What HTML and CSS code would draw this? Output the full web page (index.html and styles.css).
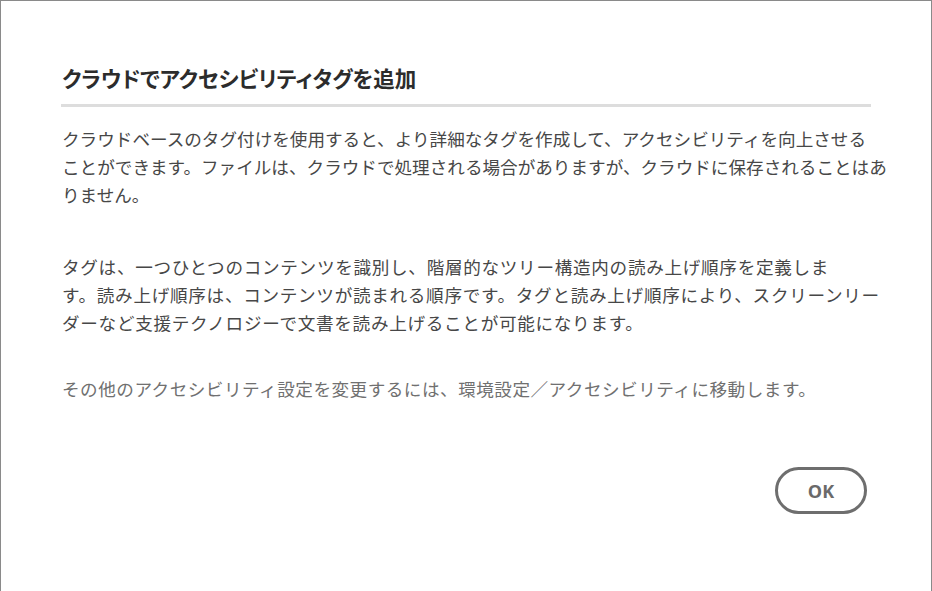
FILE: index.html
```html
<!DOCTYPE html>
<html lang="ja">
<head>
<meta charset="utf-8">
<link rel="stylesheet" href="styles.css">
</head>
<body>
<div class="dialog">
  <h1 class="title">クラウドでアクセシビリティタグを追加</h1>
  <div class="divider"></div>
  <p class="para first">クラウドベースのタグ付けを使用すると、より詳細なタグを作成して、アクセシビリティを向上させる<br>ことができます。ファイルは、クラウドで処理される場合がありますが、クラウドに保存されることはあ<br>りません。</p>
  <p class="para second">タグは、一つひとつのコンテンツを識別し、階層的なツリー構造内の読み上げ順序を定義しま<br>す。読み上げ順序は、コンテンツが読まれる順序です。タグと読み上げ順序により、スクリーンリー<br>ダーなど支援テクノロジーで文書を読み上げることが可能になります。</p>
  <p class="para note">その他のアクセシビリティ設定を変更するには、環境設定／アクセシビリティに移動します。</p>
  <div class="actions">
    <button class="ok">OK</button>
  </div>
</div>
</body>
</html>
```
FILE: styles.css
```css
html, body {
  margin: 0;
  padding: 0;
  background: #fff;
}
.dialog {
  box-sizing: border-box;
  width: 932px;
  height: 591px;
  border: 1px solid #8a8a8a;
  border-bottom: none;
  padding: 62px 60px 0 60px;
  display: flex;
  flex-direction: column;
  font-family: "Noto Sans CJK JP", "Noto Sans", sans-serif;
}
.title {
  margin: 0 0 0 1px;
  font-size: 21.5px;
  line-height: 30px;
  font-weight: 700;
  color: #2c2c2c;
  font-feature-settings: "palt";
}
.divider {
  margin-top: 11px;
  height: 3px;
  background: #dddddd;
}
.para {
  margin: 0 0 0 1px;
  font-size: 17.6px;
  line-height: 28px;
  color: #474747;
  white-space: nowrap;
}
.first { margin-top: 18px; }
.second { margin-top: 44px; letter-spacing: 0.7px; }
.note { margin-top: 38px; color: #707070; letter-spacing: 0.5px; }
.actions {
  margin-top: 64px;
  display: flex;
  justify-content: flex-end;
  padding-right: 4px;
}
.ok {
  box-sizing: border-box;
  width: 92px;
  height: 47px;
  border: 3px solid #6e6e6e;
  border-radius: 24px;
  background: #fff;
  color: #6a6a6a;
  font-family: "Open Sans", "Noto Sans", sans-serif;
  font-weight: 700;
  font-size: 18px;
  padding: 0;
}
```
